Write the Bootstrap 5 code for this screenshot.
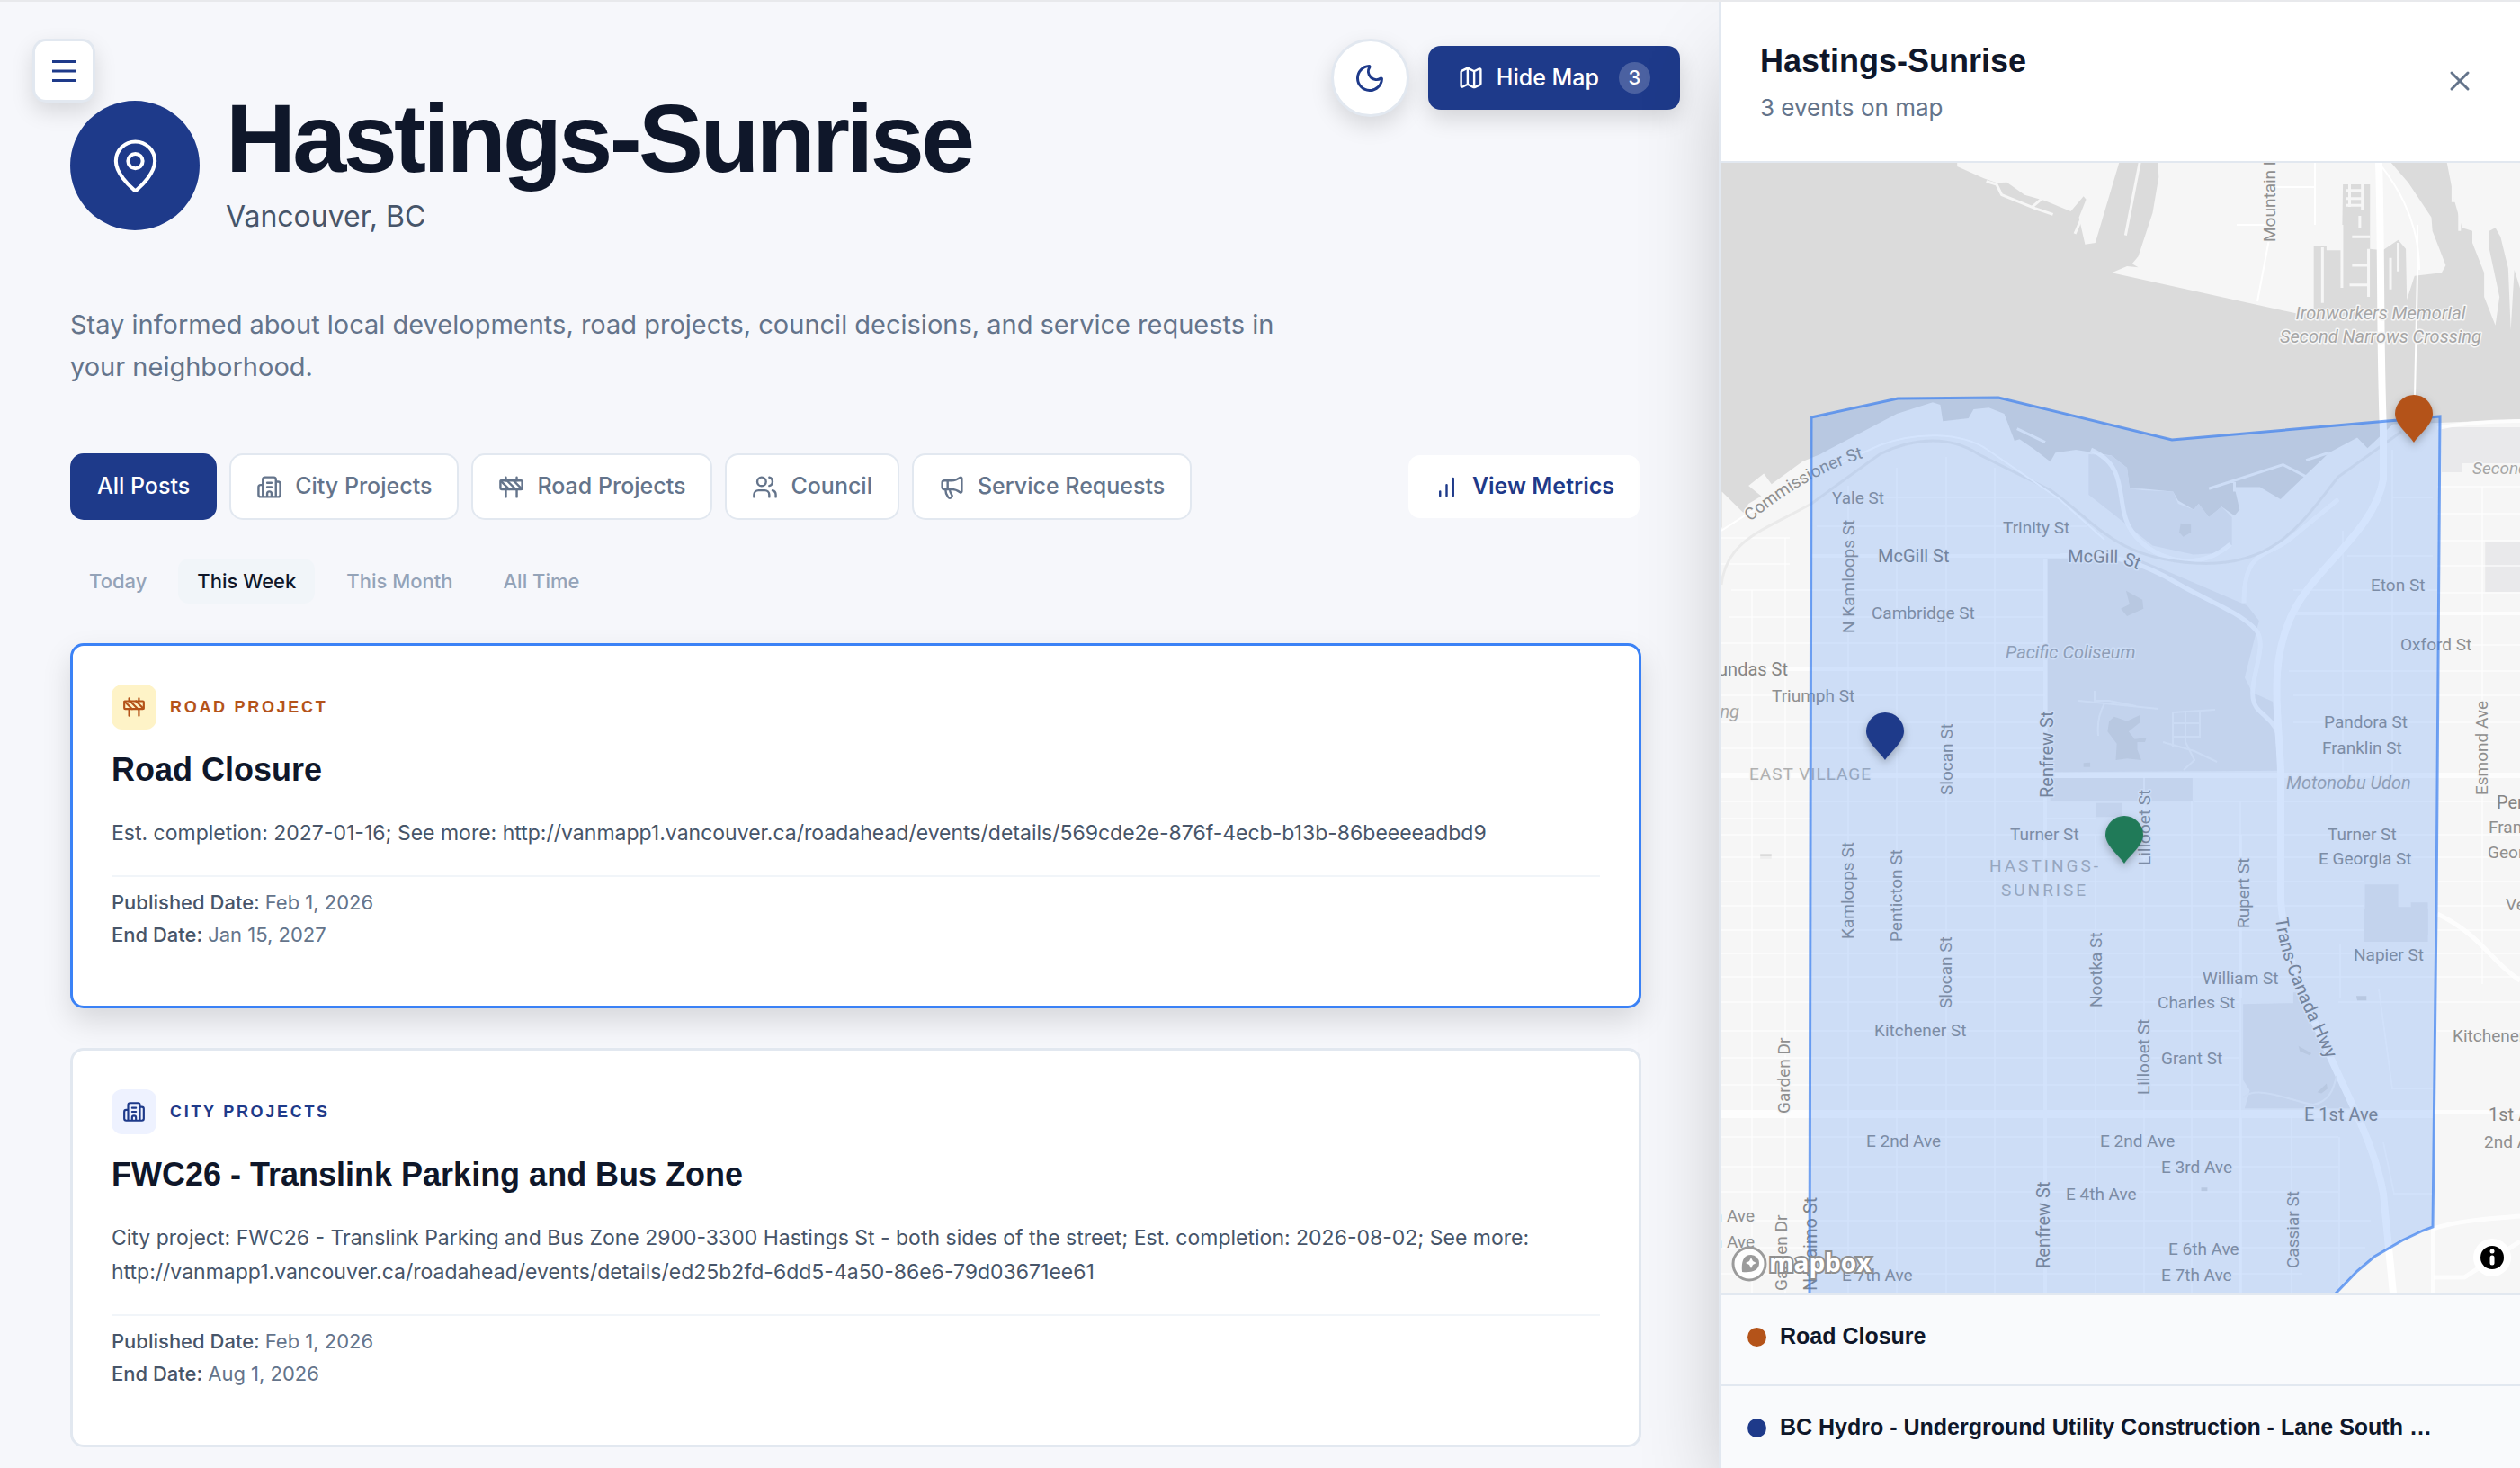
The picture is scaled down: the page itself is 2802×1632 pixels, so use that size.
<!DOCTYPE html>
<html lang="en">
<head>
<meta charset="utf-8">
<meta name="viewport" content="width=device-width, initial-scale=1">
<title>Hastings-Sunrise</title>
<link href="https://cdn.jsdelivr.net/npm/bootstrap@5.3.0/dist/css/bootstrap.min.css" rel="stylesheet">
<style>
  :root { --navy: #1e3a8a; --ink: #0f172a; --slate: #475569; --muted: #64748b; --soft: #94a3b8; --line: #e2e8f0; --rust: #b45319; }
  body { font-family: Inter, sans-serif; font-size: 25px; color: var(--muted); background: #f6f7fb; }
  h1, h2, .item-title { font-family: "Liberation Sans", Arial, sans-serif; font-weight: 700; color: var(--ink); }
  .page { border-top: 2px solid #e8e9ec; }
  .feed { padding: 93px 86px 0 78px; min-width: 0; }
  .ico { width: 29px; height: 29px; fill: none; stroke: currentColor; stroke-width: 2; stroke-linecap: round; stroke-linejoin: round; flex: none; }
  .ico-lg { width: 36px; height: 36px; }
  .ico-sm { width: 26px; height: 26px; }

  .float-btn { background: #fff; color: var(--navy); border: 3px solid var(--line); box-shadow: 0 10px 24px rgba(0,0,0,.13); }
  .menu-btn { top: 41px; left: 36px; width: 70px; height: 71px; border-radius: 15px; }
  .top-tools { top: 41px; right: 43px; gap: 21px; }
  .theme-btn { width: 87px; height: 87px; }
  .map-btn { height: 71px; padding: 0 32px; gap: 14px; border-radius: 14px; background: var(--navy); color: #fff; font-size: 25px; font-weight: 500; box-shadow: 0 10px 24px rgba(0,0,0,.14); }
  .count { width: 35px; height: 35px; margin-left: 8px; font-size: 22px; background: rgba(255,255,255,.2); }

  .place-mark { width: 144px; height: 144px; background: var(--navy); color: #fff; }
  .place-mark .ico { width: 65px; height: 65px; stroke-width: 1.5; }
  .place { gap: 29px; margin-bottom: 64px; }
  .place h1 { font-size: 108px; line-height: 118px; letter-spacing: -.034em; }
  .place p { font-size: 32px; line-height: 48px; padding: 4px 0 8px; color: var(--slate); }
  .intro { font-size: 29px; line-height: 47px; max-width: 1382px; margin-bottom: 73px; }

  .filters { gap: 14px; margin-bottom: 43px; }
  .chip { height: 74px; padding: 0 28px; gap: 14px; border: 2px solid var(--line); border-radius: 15px; background: #fff; color: var(--muted); font-size: 25px; font-weight: 500; }
  .chip.active { background: var(--navy); border-color: var(--navy); color: #fff; }
  .metrics { border-color: transparent; background-clip: padding-box; color: var(--navy); font-weight: 600; }
  .metrics:hover { color: var(--navy); }
  .times { gap: 14px; margin-bottom: 44px; }
  .time { height: 50px; padding: 0 21px; border: 0; border-radius: 12px; background: none; color: var(--soft); font-size: 22px; font-weight: 500; }
  .time.active { background: #f1f5f9; color: var(--ink); }

  .post { background: #fff; border: 3px solid var(--line); border-radius: 15px; padding: 43px 43px 61px; margin-bottom: 44px; }
  .post.active { border-color: #3b82f6; box-shadow: 0 14px 32px rgba(0,0,0,.13); }
  .kind { gap: 15px; margin-bottom: 23px; color: var(--navy); font-family: "Liberation Sans", Arial, sans-serif; font-size: 18px; font-weight: 700; letter-spacing: .15em; }
  .kind span { width: 50px; height: 50px; border-radius: 12px; background: #eef2ff; }
  .kind.road { color: var(--rust); }
  .kind.road span { background: #fef3c7; }
  .post h2 { font-size: 36px; line-height: 44px; margin-bottom: 29px; }
  .post p { font-size: 23px; line-height: 38px; margin-bottom: 28px; color: var(--slate); }
  .post dl { border-top: 2px solid #f1f5f9; padding-top: 10px; font-size: 22px; line-height: 36px; }
  .post dl div { gap: 6px; }
  .post dt { font-weight: 500; color: var(--slate); }

  .map-panel { flex: 0 0 31.8%; min-width: 0; background: #fff; border-left: 3px solid var(--line); box-shadow: 0 50px 100px -24px rgba(0,0,0,.3); }
  .map-head { height: 179px; padding: 37px 42px 0 43px; border-bottom: 2px solid var(--line); }
  .map-head h2 { font-size: 36px; line-height: 58px; }
  .map-head p { font-size: 26px; line-height: 45px; }
  .close-btn { margin-top: 26px; padding: 7px; color: var(--muted); }
  .map-box { min-height: 0; background: #f6f6f6; }
  .item-list { max-height: 194px; background: #f9fafc; }
  .item { height: 101px; padding: 0 29px 7px; gap: 15px; border-top: 2px solid var(--line); }
  .dot { width: 21px; height: 21px; flex: none; }
  .item-title { font-size: 25px; }

  .lbl text { font-family: Roboto, sans-serif; font-size: 19px; fill: #8f8f8f; stroke: #f6f6f6; stroke-width: 3; paint-order: stroke; stroke-linejoin: round; }
  .lbl .big { font-size: 20px; fill: #858585; }
  .lbl .poi { font-style: italic; fill: #a6a6a6; }
  .lbl .area { fill: #b0b0b0; }
  .flat { vector-effect: non-scaling-stroke; }
</style>
</head>
<body>
<svg class="d-none" aria-hidden="true">
  <symbol id="i-city" viewBox="0 0 24 24"><path d="M10 12h4M10 8h4M14 21v-3a2 2 0 0 0-4 0v3M6 10H4a2 2 0 0 0-2 2v7a2 2 0 0 0 2 2h16a2 2 0 0 0 2-2V9a2 2 0 0 0-2-2h-2M6 21V5a2 2 0 0 1 2-2h8a2 2 0 0 1 2 2v16"/></symbol>
  <symbol id="i-road" viewBox="0 0 24 24"><rect x="2" y="6" width="20" height="8" rx="1"/><path d="M17 14v7M7 14v7M17 3v3M7 3v3M10 14 2.3 6.3M14 6l7.7 7.7M8 6l8 8"/></symbol>
  <symbol id="i-users" viewBox="0 0 24 24"><path d="M16 21v-2a4 4 0 0 0-4-4H6a4 4 0 0 0-4 4v2M16 3.128a4 4 0 0 1 0 7.744M22 21v-2a4 4 0 0 0-3-3.87"/><circle cx="9" cy="7" r="4"/></symbol>
  <symbol id="i-horn" viewBox="0 0 24 24"><path d="M11 6a13 13 0 0 0 8.4-2.8A1 1 0 0 1 21 4v12a1 1 0 0 1-1.6.8A13 13 0 0 0 11 14H5a2 2 0 0 1-2-2V8a2 2 0 0 1 2-2zM6 14a12 12 0 0 0 2.4 7.2 2 2 0 0 0 3.2-2.4A8 8 0 0 1 10 14M8 6v8"/></symbol>
  <symbol id="i-pin" viewBox="-24 -56 48 60"><path d="M0 0C-5-8-21-20-21-32A21 21 0 1 1 21-32C21-20 5-8 0 0Z"/></symbol>
</svg>

<div class="page d-flex vh-100 overflow-hidden position-relative">
  <button type="button" class="menu-btn float-btn btn position-absolute p-0 d-flex align-items-center justify-content-center" aria-label="Menu">
    <svg width="26" height="24" viewBox="0 0 26 24" stroke="currentColor" stroke-width="3"><path d="M0 1.5h26M0 12h26M0 22.5h26"/></svg>
  </button>

  <main class="feed flex-grow-1 position-relative overflow-hidden">
    <div class="top-tools position-absolute d-flex align-items-center">
      <button type="button" class="theme-btn float-btn btn rounded-circle p-0 d-flex align-items-center justify-content-center" aria-label="Dark mode">
        <svg class="ico ico-lg" viewBox="0 0 24 24"><path d="M20.985 12.486a9 9 0 1 1-9.473-9.472c.405-.022.617.46.402.803a6 6 0 0 0 8.268 8.268c.344-.215.825-.004.803.401"/></svg>
      </button>
      <button type="button" class="map-btn btn d-flex align-items-center">
        <svg class="ico" viewBox="0 0 24 24"><path d="M14.106 5.553a2 2 0 0 0 1.788 0l3.659-1.83A1 1 0 0 1 21 4.619v12.764a1 1 0 0 1-.553.894l-4.553 2.277a2 2 0 0 1-1.788 0l-4.212-2.106a2 2 0 0 0-1.788 0l-3.659 1.83A1 1 0 0 1 3 19.381V6.618a1 1 0 0 1 .553-.894l4.553-2.277a2 2 0 0 1 1.788 0zM15 5.764v15M9 3.236v15"/></svg>
        Hide Map
        <span class="count rounded-circle d-flex align-items-center justify-content-center">3</span>
      </button>
    </div>

    <header class="place d-flex align-items-center">
      <div class="place-mark rounded-circle flex-shrink-0 d-flex align-items-center justify-content-center">
        <svg class="ico" viewBox="0 0 24 24"><path d="M20 10c0 4.993-5.539 10.193-7.399 11.799a1 1 0 0 1-1.202 0C9.539 20.193 4 14.993 4 10a8 8 0 0 1 16 0"/><circle cx="12" cy="10" r="3"/></svg>
      </div>
      <div>
        <h1 class="m-0">Hastings-Sunrise</h1>
        <p class="m-0">Vancouver, BC</p>
      </div>
    </header>
    <p class="intro">Stay informed about local developments, road projects, council decisions, and service requests in your neighborhood.</p>

    <nav class="filters d-flex align-items-center">
      <button type="button" class="chip btn active">All Posts</button>
      <button type="button" class="chip btn d-flex align-items-center"><svg class="ico"><use href="#i-city"/></svg>City Projects</button>
      <button type="button" class="chip btn d-flex align-items-center"><svg class="ico"><use href="#i-road"/></svg>Road Projects</button>
      <button type="button" class="chip btn d-flex align-items-center"><svg class="ico"><use href="#i-users"/></svg>Council</button>
      <button type="button" class="chip btn d-flex align-items-center"><svg class="ico"><use href="#i-horn"/></svg>Service Requests</button>
      <a href="#metrics" class="chip metrics btn d-flex align-items-center ms-auto"><svg class="ico" viewBox="0 0 24 24"><path d="M12 20V10M18 20V4M6 20v-4"/></svg>View Metrics</a>
    </nav>
    <div class="times d-flex">
      <button type="button" class="time">Today</button>
      <button type="button" class="time active">This Week</button>
      <button type="button" class="time">This Month</button>
      <button type="button" class="time">All Time</button>
    </div>

    <article class="post active">
      <div class="kind road d-flex align-items-center"><span class="d-flex align-items-center justify-content-center"><svg class="ico ico-sm"><use href="#i-road"/></svg></span>ROAD PROJECT</div>
      <h2>Road Closure</h2>
      <p>Est. completion: 2027-01-16; See more: http://vanmapp1.vancouver.ca/roadahead/events/details/569cde2e-876f-4ecb-b13b-86beeeeadbd9</p>
      <dl class="m-0">
        <div class="d-flex"><dt>Published Date:</dt><dd class="m-0">Feb 1, 2026</dd></div>
        <div class="d-flex"><dt>End Date:</dt><dd class="m-0">Jan 15, 2027</dd></div>
      </dl>
    </article>
    <article class="post">
      <div class="kind d-flex align-items-center"><span class="d-flex align-items-center justify-content-center"><svg class="ico ico-sm"><use href="#i-city"/></svg></span>CITY PROJECTS</div>
      <h2>FWC26 - Translink Parking and Bus Zone</h2>
      <p>City project: FWC26 - Translink Parking and Bus Zone 2900-3300 Hastings St - both sides of the street; Est. completion: 2026-08-02; See more: http://vanmapp1.vancouver.ca/roadahead/events/details/ed25b2fd-6dd5-4a50-86e6-79d03671ee61</p>
      <dl class="m-0">
        <div class="d-flex"><dt>Published Date:</dt><dd class="m-0">Feb 1, 2026</dd></div>
        <div class="d-flex"><dt>End Date:</dt><dd class="m-0">Aug 1, 2026</dd></div>
      </dl>
    </article>
  </main>

  <aside class="map-panel position-relative d-flex flex-column">
    <header class="map-head flex-shrink-0 d-flex justify-content-between align-items-start">
      <div>
        <h2 class="m-0">Hastings-Sunrise</h2>
        <p class="m-0">3 events on map</p>
      </div>
      <button type="button" class="close-btn btn border-0 d-flex" aria-label="Close map"><svg class="ico ico-lg" viewBox="0 0 24 24"><path d="M18 6 6 18M6 6l12 12"/></svg></button>
    </header>

    <div class="map-box flex-grow-1">
      <svg class="d-block w-100 h-100" viewBox="1914 181 888 1257" preserveAspectRatio="xMidYMid slice" role="img" aria-label="Map of Hastings-Sunrise">
        <!-- water, inlets and docks on the north shore -->
        <g transform="translate(1910 170) scale(.5688 .3333)">
          <path fill="#dbdbdb" d="M-5 30H468V45L520 85 545 100 565 98 600 140 640 160 690 195 715 145 720 155 706 215 718 305 738 300 785 30H860L862 80 850 200 822 345 810 370 822 382 800 378 770 400 1130 535H1165V312H1190V325H1220L1222 105H1275V320L1300 325 1330 290 1345 320 1347 490 1362 410 1415 400 1423 375 1397 260 1395 215 1350 100 1315 30H1425L1440 160 1455 250 1475 260V300L1498 400V480L1520 575 1528 480 1508 320V260L1520 250 1530 280 1545 385 1550 590 1557 390 1568 450 1580 450V888L1411 900 1320 905 1270 985 1250 950 1195 1000 1100 1155 1060 1115 1010 1115 1020 1190 1010 1210 985 1180 960 1215 940 1170 930 1190 900 1160 890 1130 830 1120 805 1120 800 1050 770 1010 700 990 660 1000 650 1030 620 990 590 955 580 960 560 870 530 850 500 855 490 885 440 895 435 840 420 832 350 870 200 1005 165 1030 105 1105 90 1070 60 1110 85 1145 60 1170 50 1200 8 1130V1250H-5Z"/>
          <g fill="none" stroke="#f6f6f6" stroke-width="3">
            <path class="flat" d="M525 95 545 105 555 140 620 185 655 205M615 180 632 155M712 215 698 270M825 30 797 275M1182 315V500M1220 240V450M1272 320V480M1235 105V180M1260 105V190M1228 125H1262M1228 152H1262M1228 175H1262M1240 280H1275M1240 375H1272M1235 440H1272M1255 210V250M1315 350V455M1330 300V395M1437 60V160H1450V260M585 920 640 965M960 1120 1105 1040 1150 1080M1010 1090V1130M1150 1025 1195 1000"/>
          </g>
        </g>
        <!-- parks -->
        <g fill="#e9e9eb">
          <path transform="translate(1910 170) scale(.5688 .3333)" d="M725 1005 770 1010 800 1050 805 1120 830 1125 890 1130 900 1170 930 1190 940 1170 960 1215 985 1180 1005 1215V1308L975 1335 930 1340 850 1310 770 1200 725 1140ZM1415 915H1570V1035H1455V1065H1415Z"/>
          <path transform="translate(1910 580) scale(.5688 .3333)" d="M645 125 830 130 1035 280 1058 330 1030 520 1045 570 1085 600 1095 830 645 835ZM650 855H928V930H650ZM740 938H790V985H740ZM1500 65H1570V235H1500ZM1265 1210H1330V1285H1355V1270H1388V1380H1265Z"/>
          <path transform="translate(1910 1010) scale(.5688 .3967)" d="M1027 268 1125 265V235H1140L1210 450 1240 560H1030L1040 510 1027 480ZM1263 0H1388V93H1263Z"/>
        </g>
        <g fill="#dbdbdb">
          <path transform="translate(1910 580) scale(.5688 .3333)" d="M798 230 830 260 832 290 800 315 788 290 805 275ZM905 5 925 10 925 35 910 50 902 35ZM775 650 800 665 825 645 825 670 803 700 815 725 838 720 835 735 820 735V760L828 795 800 790 778 795 780 740 762 700 765 665ZM715 805 728 803V818H715ZM83 1108H105V1123H83Z"/>
          <path transform="translate(1910 1010) scale(.5688 .3967)" d="M1248 245 1268 245 1268 258 1250 258ZM1135 385 1160 405 1158 412 1138 400ZM1172 515 1190 490 1192 505 1180 518ZM945 782H957V792H945Z"/>
        </g>
        <!-- local streets, broken where they meet the parks -->
        <g fill="none" stroke="#fff" stroke-width="2" stroke-opacity=".55">
          <path d="M1914 598H1990M1914 627H1990M1925 656H2274M2610 618H2705M2550 656H2710M1922 686H2274M1914 715H2274M2710 746H2802M2545 746H2710M1914 773H2274M2550 773H2802M1914 803H2274M2550 803H2802M1914 832H2274M1914 891H2274M2440 891H2802M1914 910H2014M2274 910H2330M1914 928H2802M1914 953H2802M1914 980H2628M2710 980H2802M1914 1007H2628M2710 1007H2802M1914 1034H2628M2710 1034H2802M1914 1060H2802M1914 1086H2802M1914 1114H2490M1914 1146H2490M1914 1176H2490M1914 1206H2490M2600 1114H2802M2710 1146H2802M1914 1264H2600M1914 1297H2600M1914 1325H2600M1914 1357H2636M1914 1387H2630M1914 1416H2560M2040 553H2290M2020 585H2320M2660 553H2705M2710 541H2802M2710 571H2802M2710 601H2802M2710 629H2802M2710 659H2802M2710 717H2802"/>
          <path d="M1948 656V1438M1985 598V1438M2055 540V1438M2109 520V1438M2164 508V1438M2218 520V1438M2330 928V1438M2384 864V1438M2437 890V1438M2491 890V1438M2548 1240V1438M2601 1264V1438M2602 1050V1110M2605 590V860M2660 500V860M2760 541V1094M2645 1100 2660 1210H2705M2650 1270 2662 1327H2705"/>
        </g>
        <g fill="none" stroke="#fff" stroke-opacity=".8">
          <path stroke-width="4" d="M2274 622V1438M1914 744H2274M2545 682H2802M2491 928V1110M2491 1236V1438M1914 1236H2802M1914 1241H2706M2705 1364V1438M1914 861H2802M1914 863H2802M2014 618H2290M2710 476C2740 470 2770 468 2802 468"/>
          <path stroke-width="5" d="M2705 1366C2730 1358 2760 1355 2802 1352M2290 618C2350 612 2390 630 2420 648S2490 680 2508 700 2490 770 2512 790 2535 810 2537 860M2706 1420H2740L2802 1380M2710 1016C2760 1040 2770 1070 2802 1090M2495 670C2495 610 2520 620 2545 600L2600 555M2325 500C2370 520 2350 560 2370 590S2440 640 2480 605"/>
        </g>
        <path fill="none" stroke="#eaeaea" stroke-width="3" d="M1914 650C1920 600 1960 590 2014 560L2090 505C2130 485 2170 485 2200 505L2280 545C2330 580 2350 620 2440 626S2560 580 2600 530L2670 480"/>
        <path fill="none" stroke="#fff" stroke-width="2" d="M1914 590C1960 560 2000 535 2090 495 2130 480 2180 480 2210 500L2290 555 2340 600M2688 250V300L2685 440M2690 300C2690 240 2660 200 2645 181M2574 181V250M2526 208H2574M2487 250H2526M2526 250 2510 335"/>
        <path fill="none" stroke="#fff" stroke-width="8" d="M2645 181C2648 280 2646 380 2650 480V533C2640 590 2575 630 2550 680 2520 740 2535 800 2536 860V1000C2540 1060 2560 1110 2580 1150 2610 1220 2640 1270 2650 1327L2661 1438"/>
        <g fill="none" stroke="#f4f4f4" stroke-width="2"><path d="M2311 779 2400 788M2329 768V779L2345 779 2375 785M2340 782C2330 800 2333 815 2333 818M2416 792 2463 789M2416 792V830M2430 790V825L2440 845 2428 856M2446 790V820M2405 825 2440 835 2465 847M2416 804H2446M2416 819H2446M2494 1220C2510 1205 2550 1225 2572 1228 2590 1225 2595 1210 2598 1196"/></g>

        <g class="lbl">
          <text transform="translate(2530 269) rotate(-90)">Mountain Hwy</text>
          <text class="big poi" x="2647" y="355" text-anchor="middle">Ironworkers Memorial</text>
          <text class="big poi" x="2647" y="381" text-anchor="middle">Second Narrows Crossing</text>
          <path id="commissioner" fill="none" d="M1946 580Q2025 514 2110 500"/>
          <text><textPath href="#commissioner">Commissioner St</textPath></text>
          <text x="2037" y="560">Yale St</text>
          <text transform="translate(2062 704) rotate(-90)">N Kamloops St</text>
          <text x="2227" y="593">Trinity St</text>
          <text class="big" x="2088" y="625">McGill St</text>
          <path id="mcgill" fill="none" d="M2299 625 2358 626 2420 650"/>
          <text class="big"><textPath href="#mcgill">McGill St</textPath></text>
          <text x="2636" y="657">Eton St</text>
          <text x="2081" y="688">Cambridge St</text>
          <text class="big poi" x="2230" y="732">Pacific Coliseum</text>
          <text x="2669" y="723">Oxford St</text>
          <text class="big" x="1988" y="751" text-anchor="end">Dundas St</text>
          <text x="1970" y="780">Triumph St</text>
          <text class="big poi" x="1934" y="798" text-anchor="end">Landing</text>
          <text class="area" x="1945" y="867" letter-spacing="1">EAST VILLAGE</text>
          <text transform="translate(2171 884) rotate(-90)">Slocan St</text>
          <text class="big" transform="translate(2283 887) rotate(-90)">Renfrew St</text>
          <text x="2584" y="809">Pandora St</text>
          <text x="2582" y="838">Franklin St</text>
          <text class="big poi" x="2542" y="877">Motonobu Udon</text>
          <text transform="translate(2766 884) rotate(-90)">Esmond Ave</text>
          <text transform="translate(2391 962) rotate(-90)">Lillooet St</text>
          <text class="big" x="2776" y="899">Pender St</text>
          <text x="2767" y="926">Frances St</text>
          <text x="2766" y="954">Georgia St</text>
          <text x="2786" y="1012">Venables St</text>
          <text x="2235" y="934">Turner St</text>
          <text x="2588" y="934">Turner St</text>
          <text x="2578" y="961">E Georgia St</text>
          <text class="area" x="2212" y="969" letter-spacing="3">HASTINGS-</text>
          <text class="area" x="2225" y="996" letter-spacing="3">SUNRISE</text>
          <text transform="translate(2501 1032) rotate(-90)">Rupert St</text>
          <text transform="translate(2061 1044) rotate(-90)">Kamloops St</text>
          <text transform="translate(2115 1047) rotate(-90)">Penticton St</text>
          <text transform="translate(2170 1121) rotate(-90)">Slocan St</text>
          <text transform="translate(2337 1120) rotate(-90)">Nootka St</text>
          <path id="highway" fill="none" d="M2530 1021C2538 1080 2562 1120 2600 1206"/>
          <text class="big"><textPath href="#highway">Trans-Canada Hwy</textPath></text>
          <text x="2617" y="1068">Napier St</text>
          <text x="2449" y="1094">William St</text>
          <text x="2399" y="1121">Charles St</text>
          <text x="2084" y="1152">Kitchener St</text>
          <text x="2403" y="1183">Grant St</text>
          <text transform="translate(2390 1217) rotate(-90)">Lillooet St</text>
          <text transform="translate(1990 1238) rotate(-90)">Garden Dr</text>
          <text class="big" x="2562" y="1246">E 1st Ave</text>
          <text x="2075" y="1275">E 2nd Ave</text>
          <text x="2335" y="1275">E 2nd Ave</text>
          <text x="2403" y="1304">E 3rd Ave</text>
          <text x="2297" y="1334">E 4th Ave</text>
          <text class="big" transform="translate(2279 1410) rotate(-90)">Renfrew St</text>
          <text transform="translate(2556 1410) rotate(-90)">Cassiar St</text>
          <text x="2411" y="1395">E 6th Ave</text>
          <text x="2403" y="1424">E 7th Ave</text>
          <text x="2048" y="1424">E 7th Ave</text>
          <text x="1951" y="1358" text-anchor="end">E 5th Ave</text>
          <text x="1951" y="1387" text-anchor="end">E 6th Ave</text>
          <text transform="translate(1987 1435) rotate(-90)">Garden Dr</text>
          <text class="big" transform="translate(2020 1435) rotate(-90)">Nanaimo St</text>
          <text x="2727" y="1158">Kitchener St</text>
          <text class="big" x="2767" y="1246">1st Ave</text>
          <text x="2762" y="1276">2nd Ave</text>
          <text x="2749" y="527" class="poi">Second Narrows</text>
        </g>

        <path fill="#3b82f6" fill-opacity=".22" stroke="#3b7ff0" stroke-opacity=".7" stroke-width="3" d="M2014 464 2110 443 2222 442 2415 489 2713 463 2709 1010 2705 1364 2694 1368 2671 1379 2640 1397 2621 1413 2595 1440H2012Z"/>

        <g style="filter:drop-shadow(0 4px 5px rgba(0,0,0,.25))">
          <use href="#i-pin" x="2660" y="436" width="48" height="60" fill="#b45319"/>
          <use href="#i-pin" x="2072" y="789" width="48" height="60" fill="#1e3a8a"/>
          <use href="#i-pin" x="2338" y="904" width="48" height="60" fill="#207a58"/>
        </g>

        <g>
          <circle cx="1945" cy="1405" r="18" fill="#fff" fill-opacity=".9" stroke="#9b9b9b" stroke-width="3"/>
          <path fill="#9b9b9b" d="M1937 1414C1936 1403 1938 1395 1947 1395A9 9 0 0 1 1956 1404C1956 1413 1947 1415 1937 1414Z"/>
          <path fill="#fff" d="m1947 1398 2 4 4 2-4 2-2 4-2-4-4-2 4-2Z"/>
          <text x="1967" y="1414" font-family="Open Sans, sans-serif" font-weight="700" font-size="28" fill="#fff" stroke="#8f8f8f" stroke-width="4" paint-order="stroke">mapbox</text>
        </g>
        <circle cx="2771" cy="1398" r="21" fill="#fff"/>
        <circle cx="2771" cy="1398" r="13" fill="#000"/>
        <path stroke="#fff" stroke-width="5" stroke-linecap="round" d="M2771 1398v6M2771 1391v.1"/>
      </svg>
    </div>

    <div class="item-list flex-shrink-0 overflow-hidden">
      <a href="#road-closure" class="item d-flex align-items-center text-decoration-none"><span class="dot rounded-circle" style="background:#b45319"></span><span class="item-title text-truncate">Road Closure</span></a>
      <a href="#bc-hydro" class="item d-flex align-items-center text-decoration-none"><span class="dot rounded-circle" style="background:#1e3a8a"></span><span class="item-title text-truncate">BC Hydro - Underground Utility Construction - Lane South …</span></a>
    </div>
  </aside>
</div>
<script src="https://cdn.jsdelivr.net/npm/bootstrap@5.3.0/dist/js/bootstrap.bundle.min.js"></script>
</body>
</html>
